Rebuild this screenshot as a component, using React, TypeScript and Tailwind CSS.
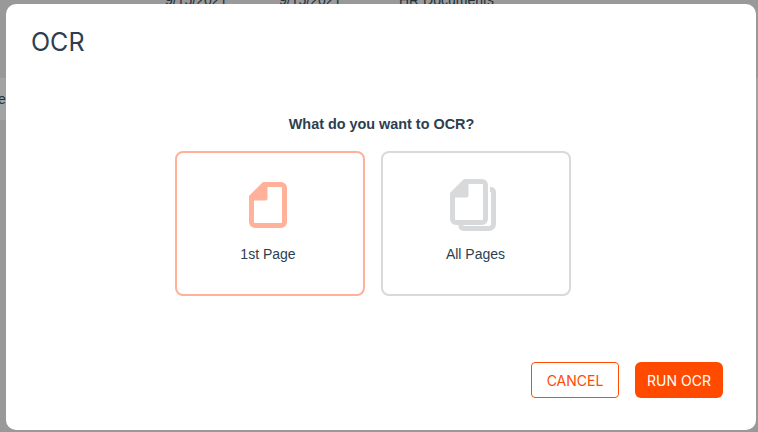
import React from 'react';

const SinglePageIcon = () => (
  <svg width="38" height="46" viewBox="0 0 38 46" fill="none">
    <path
      d="M15 2.500H32a3.500 3.500 0 0 1 3.500 3.500V40a3.500 3.500 0 0 1-3.500 3.500H6A3.500 3.500 0 0 1 2.500 40V15Z"
      stroke="#ffb199"
      strokeWidth="5"
      strokeLinejoin="round"
    />
    <path d="M14 0.500 0.500 14V18.500H16a2.500 2.500 0 0 0 2.500-2.500V0.500Z" fill="#ffb199" />
  </svg>
);

const AllPagesIcon = () => (
  <svg width="46" height="52" viewBox="0 0 46 52" fill="none">
    <path
      d="M15 2.500H32a3.500 3.500 0 0 1 3.500 3.500V40a3.500 3.500 0 0 1-3.500 3.500H6A3.500 3.500 0 0 1 2.500 40V15Z"
      stroke="#d8d9da"
      strokeWidth="5"
      strokeLinejoin="round"
    />
    <path d="M14 0.500 0.500 14V18.500H16a2.500 2.500 0 0 0 2.500-2.500V0.500Z" fill="#d8d9da" />
    <path
      d="M40 10.500h1a2.500 2.500 0 0 1 2.500 2.500V45a4.500 4.500 0 0 1-4.500 4.500H13.500a2.500 2.500 0 0 1-2.500-2.500V46"
      stroke="#d8d9da"
      strokeWidth="5"
    />
  </svg>
);

const App = () => {
  return (
    <div className="relative w-[758px] h-[432px] overflow-hidden bg-[#999999] font-['Liberation_Sans',sans-serif]">
      {/* Page behind the overlay */}
      <div className="flex -mt-[8px] pl-[165px] text-[14px] leading-[16px] text-[#22303c]">
        <span className="w-[114px]">9/15/2021</span>
        <span className="w-[120px]">9/15/2021</span>
        <span>HR Documents</span>
      </div>
      <div className="mt-[70px] h-[42px] bg-[#a3a3a3] flex items-center text-[14px] text-[#22303c]">
        <span className="-ml-[2px]">e</span>
      </div>

      {/* Dialog */}
      <div className="absolute left-[6px] top-[4px] w-[750px] h-[426px] bg-white rounded-[10px] flex flex-col pt-[23px] pb-[32px] pl-[25px] pr-[33px]">
        <h1 className="text-[25px] leading-[30px] font-normal text-[#2c3e50] font-['Inter',sans-serif]">OCR</h1>

        <p className="mt-[59px] text-center text-[14.4px] leading-[16px] font-bold text-[#2c3e50] pl-[9px]">
          What do you want to OCR?
        </p>

        <div className="mt-[19px] flex justify-center gap-[16px] pr-[8px]">
          <button className="w-[190px] h-[145px] rounded-[8px] border-2 border-[#ffb199] bg-white flex flex-col items-center pt-[29px] pr-[4px]">
            <SinglePageIcon />
            <span className="mt-[18px] text-[14px] leading-[16px] text-[#2c3e50]">1st Page</span>
          </button>
          <button className="w-[190px] h-[145px] rounded-[8px] border-2 border-[#d8d9da] bg-white flex flex-col items-center pt-[26px] pr-[1px]">
            <div className="pr-[6px]">
              <AllPagesIcon />
            </div>
            <span className="mt-[15px] text-[14px] leading-[16px] text-[#2c3e50]">All Pages</span>
          </button>
        </div>

        <div className="mt-auto flex justify-end gap-[16px]">
          <button className="w-[88px] h-[36px] rounded-[4px] border border-[#ff4a00] bg-white text-[14px] text-[#ff4a00] font-['Inter',sans-serif]">
            CANCEL
          </button>
          <button className="w-[88px] h-[36px] rounded-[6px] bg-[#ff4a00] text-[14px] text-white font-['Inter',sans-serif]">
            RUN OCR
          </button>
        </div>
      </div>
    </div>
  );
};

export default App;
